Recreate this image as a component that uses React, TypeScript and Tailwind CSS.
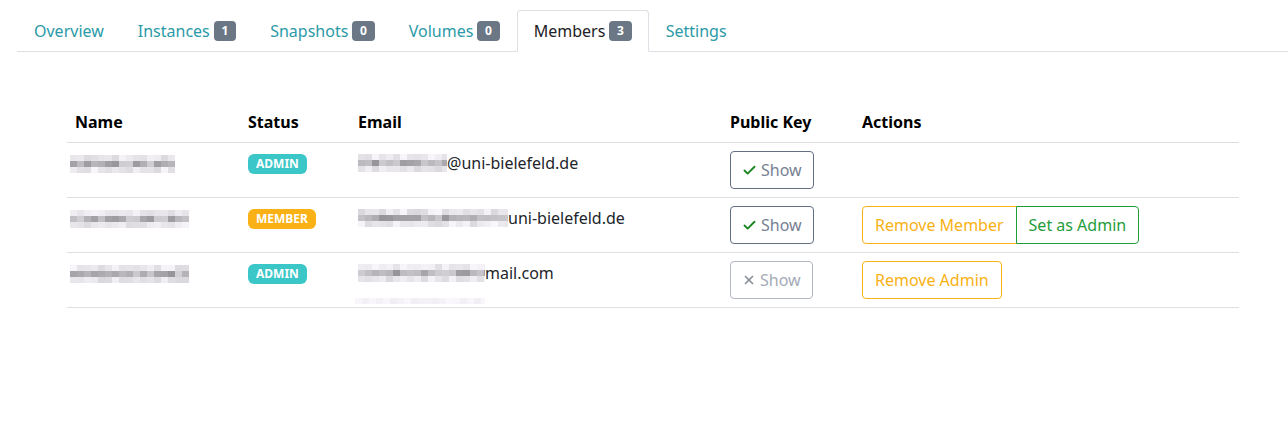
import { Check, X } from "lucide-react"

const tabs = [
  { label: "Overview" },
  { label: "Instances", count: 1 },
  { label: "Snapshots", count: 0 },
  { label: "Volumes", count: 0 },
  { label: "Members", count: 3, active: true },
  { label: "Settings" },
]

// little pixelated blur standing in for redacted text
function Blur({ width, seed, faint = false, rows = 3 }: { width: number; seed: number; faint?: boolean; rows?: number }) {
  const cols = Math.ceil(width / 7)
  let s = seed
  const rand = () => {
    s = (s * 9301 + 49297) % 233280
    return s / 233280
  }
  const cells: { x: number; y: number; c: string }[] = []
  for (let r = 0; r < rows; r++) {
    for (let i = 0; i < cols; i++) {
      const base = r === 1 ? 150 + rand() * 60 : 218 + rand() * 30
      const v = faint ? 240 + rand() * 10 : base
      const g = Math.round(v)
      cells.push({ x: i * 7, y: r * 6, c: `rgb(${g},${g - 2},${g + 2})` })
    }
  }
  return (
    <svg width={width} height={rows * 6} className="block shrink-0">
      {cells.map((cell, i) => (
        <rect key={i} x={cell.x} y={cell.y} width={7} height={6} fill={cell.c} />
      ))}
    </svg>
  )
}

function StatusBadge({ kind }: { kind: "admin" | "member" }) {
  return kind === "admin" ? (
    <span className="rounded-md bg-[#3bc6c8] px-2 py-[2px] text-xs font-bold leading-4 text-white">ADMIN</span>
  ) : (
    <span className="rounded-md bg-[#f9b115] px-2 py-[2px] text-xs font-bold leading-4 text-white">MEMBER</span>
  )
}

function ShowButton({ enabled }: { enabled: boolean }) {
  return enabled ? (
    <button className="flex h-[38px] items-center gap-1 rounded border border-[#636f83] px-[11px] text-[#768192]">
      <Check className="h-[15px] w-[15px] text-[#19861f]" strokeWidth={3} />
      Show
    </button>
  ) : (
    <button className="flex h-[38px] items-center gap-1 rounded border border-[#b1b7c1] px-[11px] text-[#a4abb6]">
      <X className="h-[14px] w-[14px] text-[#8a919c]" strokeWidth={3} />
      Show
    </button>
  )
}

export default function App() {
  const members = [
    { nameW: 105, status: "admin" as const, emailW: 89, domain: "@uni-bielefeld.de", show: true, actions: [] as string[] },
    { nameW: 119, status: "member" as const, emailW: 150, domain: "uni-bielefeld.de", show: true, actions: ["remove-member", "set-admin"] },
    { nameW: 119, status: "admin" as const, emailW: 127, domain: "mail.com", show: false, actions: ["remove-admin"] },
  ]

  return (
    <div className="min-h-[438px] bg-white pl-[17px] font-['Noto_Sans',sans-serif] text-base text-[#212529]">
      <div className="flex border-b border-[#dcdfe4] pt-[10px]">
        {tabs.map((tab) => (
          <div
            key={tab.label}
            className={
              tab.active
                ? "-mb-px flex items-center rounded-t border border-[#dcdfe4] border-b-white bg-white px-4 py-2 leading-6 text-[#1d2125]"
                : "-mb-px flex items-center border border-transparent px-4 py-2 leading-6 text-[#2a9aa8]"
            }
          >
            {tab.label}
            {tab.count !== undefined && (
              <span className="ml-1 rounded bg-[#6b7785] px-[7.75px] text-xs font-bold leading-5 text-white">{tab.count}</span>
            )}
          </div>
        ))}
      </div>

      <div className="ml-[50px] mr-[49px] mt-[50px]">
        <table className="w-full table-fixed border-collapse text-left">
          <thead>
            <tr className="border-b border-[#dcdfe4]">
              <th className="w-[173px] px-2 py-2 font-bold leading-6 text-black">Name</th>
              <th className="w-[110px] px-2 py-2 font-bold leading-6 text-black">Status</th>
              <th className="w-[372px] px-2 py-2 font-bold leading-6 text-black">Email</th>
              <th className="w-[132px] px-2 py-2 font-bold leading-6 text-black">Public Key</th>
              <th className="px-2 py-2 font-bold leading-6 text-black">Actions</th>
            </tr>
          </thead>
          <tbody>
            {members.map((m, i) => (
              <tr key={i} className="h-[55px] border-b border-[#dcdfe4] align-top">
                <td className="px-[3px] pt-[12px]">
                  <Blur width={m.nameW} seed={i * 31 + 7} />
                </td>
                <td className="px-2 pt-[11px]">
                  <div className="flex">
                    <StatusBadge kind={m.status} />
                  </div>
                </td>
                <td className="relative px-2 pt-2">
                  <div className="flex items-center leading-6">
                    <Blur width={m.emailW} seed={i * 17 + 3} />
                    <span>{m.domain}</span>
                  </div>
                  {i === 2 && (
                    <div className="absolute left-[5px] top-[45px]">
                      <Blur width={130} seed={91} faint rows={1} />
                    </div>
                  )}
                </td>
                <td className="px-2 pt-2">
                  <ShowButton enabled={m.show} />
                </td>
                <td className="px-2 pt-2">
                  <div className="flex">
                    {m.actions.includes("remove-member") && (
                      <button className="h-[38px] rounded-l border border-[#f9b115] px-3 text-[#f9b115]">Remove Member</button>
                    )}
                    {m.actions.includes("set-admin") && (
                      <button className="-ml-px h-[38px] rounded-r border border-[#1f9d3b] px-3 text-[#1f9d3b]">Set as Admin</button>
                    )}
                    {m.actions.includes("remove-admin") && (
                      <button className="h-[38px] rounded border border-[#f9b115] px-3 text-[#f9b115]">Remove Admin</button>
                    )}
                  </div>
                </td>
              </tr>
            ))}
          </tbody>
        </table>
      </div>
    </div>
  )
}
